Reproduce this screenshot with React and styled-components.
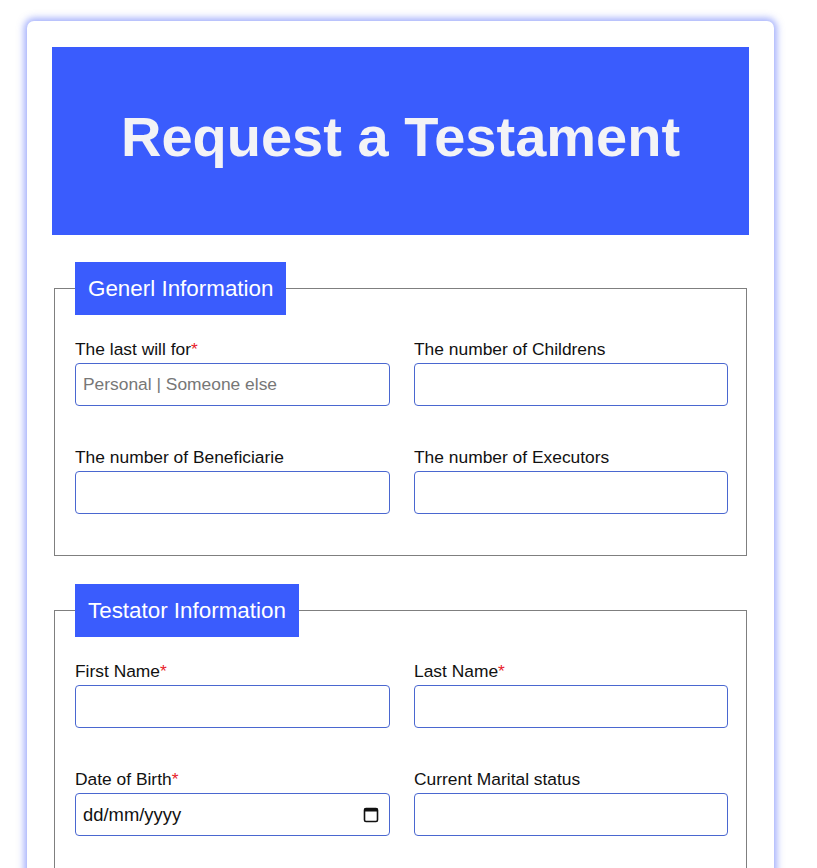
import React from 'react'
import styled, { createGlobalStyle } from 'styled-components'

const GlobalStyle = createGlobalStyle`
  body {
    margin: 0;
    background: #fff;
    font-family: "Liberation Sans", Arial, sans-serif;
  }
`

const Page = styled.div`
  padding: 21px 0 40px 27px;
`

const Card = styled.form`
  width: 747px;
  box-sizing: border-box;
  background: #fff;
  border-radius: 7px;
  box-shadow: 0 0 7px 3px rgba(75, 100, 250, 0.5);
  padding: 26px 25px 30px 25px;
`

const Header = styled.header`
  background: #3a5cfd;
  height: 188px;
  box-sizing: border-box;
  padding-bottom: 10px;
  display: flex;
  align-items: center;
  justify-content: center;
  margin-bottom: 27px;
  h1 {
    margin: 0;
    color: #f3f3f6;
    font-size: 56px;
    font-weight: 700;
  }
`

const Section = styled.fieldset`
  margin: 0 2px 28px 2px;
  padding: 0 17px 41px 20px;
  border: 1px solid #7f7f7f;
  min-width: 0;
`

const Legend = styled.legend`
  background: #3a5cfd;
  color: #fff;
  font-size: 22.4px;
  line-height: 53px;
  height: 53px;
  padding: 0 13px;
`

const Grid = styled.div`
  display: grid;
  grid-template-columns: 315px 314px;
  column-gap: 24px;
  row-gap: 41px;
  padding-top: 24px;
`

const Field = styled.label`
  display: flex;
  flex-direction: column;
  gap: 4px;
  font-size: 17.4px;
  color: #111;
`

const LabelText = styled.span`
  line-height: 20px;
`

const Star = styled.span`
  color: #e8202a;
`

const Input = styled.input`
  box-sizing: border-box;
  height: 43px;
  width: 100%;
  border: 1px solid #4a67d0;
  border-radius: 4px;
  padding: 0 7px;
  font-family: "Liberation Sans", Arial, sans-serif;
  font-size: ${p => (p.$dark ? '18.4px' : '17.4px')};
  color: #111;
  background: #fff;
  &::placeholder {
    color: ${p => (p.$dark ? '#111' : '#777')};
  }
`

const DateWrap = styled.div`
  position: relative;
`

const CalendarIcon = styled.svg`
  position: absolute;
  right: 11px;
  top: 13px;
  pointer-events: none;
`

function FormField({ label, required, placeholder, date }) {
  return (
    <Field>
      <LabelText>
        {label}
        {required && <Star>*</Star>}
      </LabelText>
      {date ? (
        <DateWrap>
          <Input $dark placeholder="dd/mm/yyyy" />
          <CalendarIcon width="16" height="17" viewBox="0 0 16 17">
            <rect x="1.5" y="2.5" width="13" height="13" rx="1.5" fill="none" stroke="#111" strokeWidth="1.6" />
            <rect x="1.5" y="2.5" width="13" height="3" fill="#111" />
          </CalendarIcon>
        </DateWrap>
      ) : (
        <Input placeholder={placeholder} />
      )}
    </Field>
  )
}

export default function App() {
  return (
    <Page>
      <GlobalStyle />
      <Card>
        <Header>
          <h1>Request a Testament</h1>
        </Header>
        <Section>
          <Legend>Generl Information</Legend>
          <Grid>
            <FormField label="The last will for" required placeholder="Personal | Someone else" />
            <FormField label="The number of Childrens" />
            <FormField label="The number of Beneficiarie" />
            <FormField label="The number of Executors" />
          </Grid>
        </Section>
        <Section>
          <Legend>Testator Information</Legend>
          <Grid>
            <FormField label="First Name" required />
            <FormField label="Last Name" required />
            <FormField label="Date of Birth" required date />
            <FormField label="Current Marital status" />
          </Grid>
        </Section>
      </Card>
    </Page>
  )
}
